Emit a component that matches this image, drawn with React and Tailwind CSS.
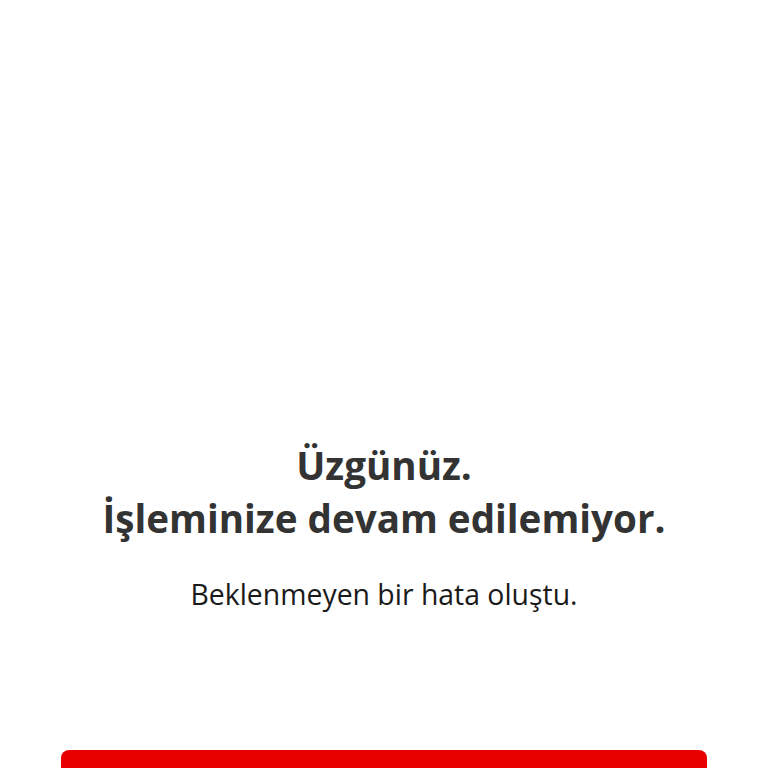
export default function App() {
  return (
    <div className="min-h-screen bg-white flex flex-col items-center font-['Open_Sans',sans-serif]">
      <div className="pt-[439px] flex flex-col items-center px-[61px] w-full">
        <h1 className="text-center text-[38.6px] leading-[53px] font-bold text-[#333333]">
          Üzgünüz.
          <br />
          İşleminize devam edilemiyor.
        </h1>
        <p className="mt-[30px] text-center text-[28.4px] leading-[38px] text-[#1a1a1a]">
          Beklenmeyen bir hata oluştu.
        </p>
        <button className="mt-[137px] w-full h-[56px] rounded-[8px] bg-[#e60000]" />
      </div>
    </div>
  );
}
